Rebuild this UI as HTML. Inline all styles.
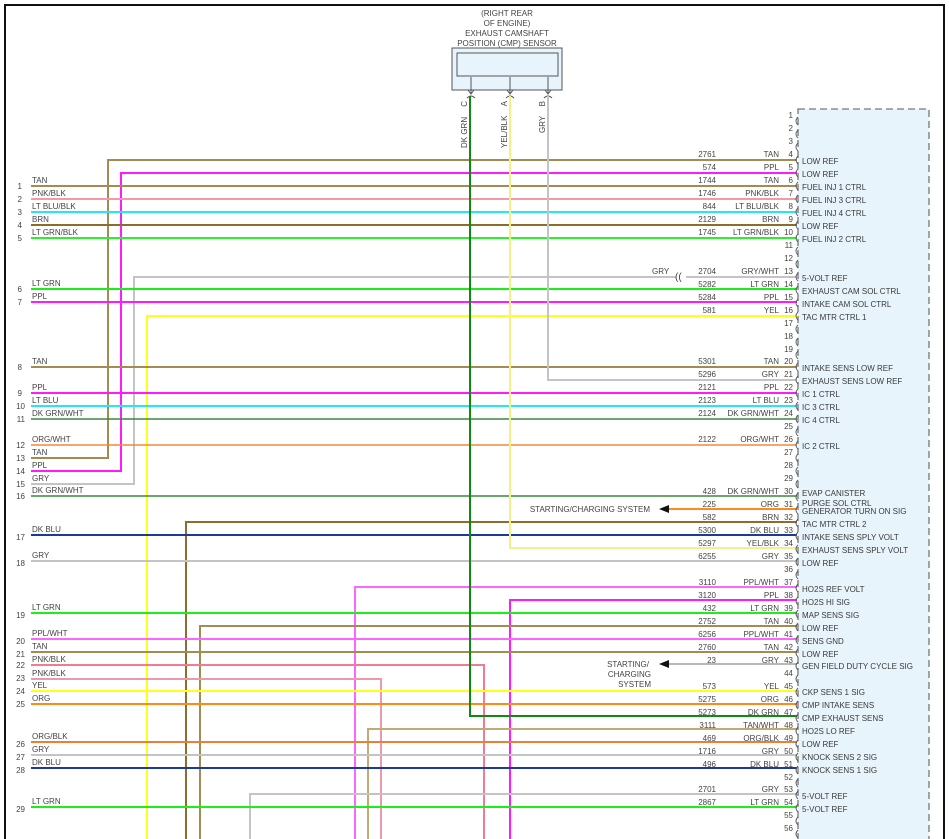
<!DOCTYPE html>
<html><head><meta charset="utf-8"><style>
html,body{margin:0;padding:0;background:#fff;}
svg{display:block;font-family:"Liberation Sans",Arial,sans-serif;}
text{font-size:8px;fill:#444;}
.r{text-anchor:end;}
.m{text-anchor:middle;}
.b{font-size:8px;fill:#3a3a3a;}
</style></head><body>
<svg width="949" height="839" viewBox="0 0 949 839" xmlns="http://www.w3.org/2000/svg">
<rect x="0" y="0" width="949" height="839" fill="#fff"/>
<path d="M5,839 V5 H944 V839" fill="none" stroke="#111" stroke-width="2"/>
<rect x="798" y="109" width="131" height="735" fill="#e8f4fb" stroke="#777" stroke-width="1.3" stroke-dasharray="7,4"/>
<text class="m" x="507" y="16">(RIGHT REAR</text>
<text class="m" x="507" y="26">OF ENGINE)</text>
<text class="m" x="507" y="36">EXHAUST CAMSHAFT</text>
<text class="m" x="507" y="46">POSITION (CMP) SENSOR</text>
<rect x="452" y="48" width="110" height="42" fill="#e8f4fb" stroke="#555" stroke-width="1"/>
<rect x="457" y="53" width="101" height="23" fill="#e8f4fb" stroke="#555" stroke-width="1"/>
<g stroke="#555" fill="none" stroke-width="1">
<path d="M471,77 V93 M468,90 L471,94 L474,90"/>
<path d="M510,77 V93 M507,90 L510,94 L513,90"/>
<path d="M548,77 V93 M545,90 L548,94 L551,90"/>
<path d="M467,98 Q471,94 475,98 M506,98 Q510,94 514,98 M544,98 Q548,94 552,98"/>
</g>
<text transform="translate(467,101) rotate(-90)" class="r">C</text>
<text transform="translate(507,101) rotate(-90)" class="r">A</text>
<text transform="translate(545,101) rotate(-90)" class="r">B</text>
<text transform="translate(467,148) rotate(-90)">DK GRN</text>
<text transform="translate(507,148) rotate(-90)">YEL/BLK</text>
<text transform="translate(545,133) rotate(-90)">GRY</text>

<g fill="none" stroke-width="2">
<path d="M31,458 H108 V160 H797" stroke="#a38b52"/>
<path d="M31,471 H121 V173 H797" stroke="#ff1aff"/>
<path d="M31,186 H797" stroke="#a38b52"/>
<path d="M31,199 H797" stroke="#f29aa8"/>
<path d="M31,212 H797" stroke="#22e8f5"/>
<path d="M31,225 H797" stroke="#8c6d2c"/>
<path d="M31,238 H797" stroke="#2cf02c"/>
<path d="M31,484 H134 V277 H676 M686,277 H797" stroke="#c4c4c4"/>
<path d="M31,289 H797" stroke="#1aef1a"/>
<path d="M31,302 H797" stroke="#ff1aff"/>
<path d="M147,839 V316 H797" stroke="#ffff1a"/>
<path d="M31,367 H797" stroke="#a38b52"/>
<path d="M548,96 V380 H797" stroke="#c4c4c4"/>
<path d="M31,393 H797" stroke="#ff1aff"/>
<path d="M31,406 H797" stroke="#22e8f5"/>
<path d="M31,419 H797" stroke="#3a8a3a" stroke-width="1.5"/>
<path d="M31,445 H797" stroke="#f0883a" stroke-width="1.5"/>
<path d="M31,496 H797" stroke="#3a8a3a" stroke-width="1.5"/>
<path d="M668,509 H797" stroke="#ff8a1a"/>
<path d="M186,839 V522 H797" stroke="#8c6d2c"/>
<path d="M31,535 H797" stroke="#1b3a9c"/>
<path d="M510,96 V548 H797" stroke="#f2f08a"/>
<path d="M31,561 H797" stroke="#c4c4c4"/>
<path d="M355,839 V587 H797" stroke="#ff66ff"/>
<path d="M510,839 V600 H797" stroke="#ff1aff"/>
<path d="M31,613 H797" stroke="#1aef1a"/>
<path d="M200,839 V626 H797" stroke="#a38b52"/>
<path d="M31,639 H797" stroke="#ff66ff"/>
<path d="M31,652 H797" stroke="#a38b52"/>
<path d="M31,665 H484 V839" stroke="#f27a92"/>
<path d="M668,664 H797" stroke="#b8b8b8"/>
<path d="M31,679 H381 V839" stroke="#ea9aaa"/>
<path d="M31,691 H797" stroke="#ffff1a"/>
<path d="M31,704 H797" stroke="#ff8a1a"/>
<path d="M470,96 V716 H797" stroke="#108a10"/>
<path d="M368,839 V729 H797" stroke="#c2aa72"/>
<path d="M31,742 H797" stroke="#e8803a"/>
<path d="M31,755 H797" stroke="#c4c4c4"/>
<path d="M31,768 H797" stroke="#1b3a9c"/>
<path d="M250,839 V794 H797" stroke="#c4c4c4"/>
<path d="M31,807 H797" stroke="#1aef1a"/>
</g>
<text x="652" y="274">GRY</text>
<text x="675" y="280" style="font-size:10px">((</text>
<path d="M659,509 L669,505 L669,513 Z" fill="#111"/>
<path d="M659,664 L669,660 L669,668 Z" fill="#111"/>
<text class="r" x="650" y="512">STARTING/CHARGING SYSTEM</text>
<text class="r" x="649" y="667">STARTING/</text>
<text class="r" x="651" y="677">CHARGING</text>
<text class="r" x="651" y="687">SYSTEM</text>

<g>
<text x="32" y="183">TAN</text><text class="r" x="22" y="189">1</text>
<text x="32" y="196">PNK/BLK</text><text class="r" x="22" y="202">2</text>
<text x="32" y="209">LT BLU/BLK</text><text class="r" x="22" y="215">3</text>
<text x="32" y="222">BRN</text><text class="r" x="22" y="228">4</text>
<text x="32" y="235">LT GRN/BLK</text><text class="r" x="22" y="241">5</text>
<text x="32" y="286">LT GRN</text><text class="r" x="22" y="292">6</text>
<text x="32" y="299">PPL</text><text class="r" x="22" y="305">7</text>
<text x="32" y="364">TAN</text><text class="r" x="22" y="370">8</text>
<text x="32" y="390">PPL</text><text class="r" x="22" y="396">9</text>
<text x="32" y="403">LT BLU</text><text class="r" x="25" y="409">10</text>
<text x="32" y="416">DK GRN/WHT</text><text class="r" x="25" y="422">11</text>
<text x="32" y="442">ORG/WHT</text><text class="r" x="25" y="448">12</text>
<text x="32" y="455">TAN</text><text class="r" x="25" y="461">13</text>
<text x="32" y="468">PPL</text><text class="r" x="25" y="474">14</text>
<text x="32" y="481">GRY</text><text class="r" x="25" y="487">15</text>
<text x="32" y="493">DK GRN/WHT</text><text class="r" x="25" y="499">16</text>
<text x="32" y="532">DK BLU</text><text class="r" x="25" y="540">17</text>
<text x="32" y="558">GRY</text><text class="r" x="25" y="566">18</text>
<text x="32" y="610">LT GRN</text><text class="r" x="25" y="618">19</text>
<text x="32" y="636">PPL/WHT</text><text class="r" x="25" y="644">20</text>
<text x="32" y="649">TAN</text><text class="r" x="25" y="657">21</text>
<text x="32" y="662">PNK/BLK</text><text class="r" x="25" y="668">22</text>
<text x="32" y="676">PNK/BLK</text><text class="r" x="25" y="681">23</text>
<text x="32" y="688">YEL</text><text class="r" x="25" y="694">24</text>
<text x="32" y="701">ORG</text><text class="r" x="25" y="707">25</text>
<text x="32" y="739">ORG/BLK</text><text class="r" x="25" y="747">26</text>
<text x="32" y="752">GRY</text><text class="r" x="25" y="760">27</text>
<text x="32" y="765">DK BLU</text><text class="r" x="25" y="773">28</text>
<text x="32" y="804">LT GRN</text><text class="r" x="25" y="812">29</text>
</g>

<g>
<text class="r" x="716" y="157">2761</text><text class="r" x="779" y="157">TAN</text>
<text class="r" x="716" y="170">574</text><text class="r" x="779" y="170">PPL</text>
<text class="r" x="716" y="183">1744</text><text class="r" x="779" y="183">TAN</text>
<text class="r" x="716" y="196">1746</text><text class="r" x="779" y="196">PNK/BLK</text>
<text class="r" x="716" y="209">844</text><text class="r" x="779" y="209">LT BLU/BLK</text>
<text class="r" x="716" y="222">2129</text><text class="r" x="779" y="222">BRN</text>
<text class="r" x="716" y="235">1745</text><text class="r" x="779" y="235">LT GRN/BLK</text>
<text class="r" x="716" y="274">2704</text><text class="r" x="779" y="274">GRY/WHT</text>
<text class="r" x="716" y="287">5282</text><text class="r" x="779" y="287">LT GRN</text>
<text class="r" x="716" y="300">5284</text><text class="r" x="779" y="300">PPL</text>
<text class="r" x="716" y="313">581</text><text class="r" x="779" y="313">YEL</text>
<text class="r" x="716" y="364">5301</text><text class="r" x="779" y="364">TAN</text>
<text class="r" x="716" y="377">5296</text><text class="r" x="779" y="377">GRY</text>
<text class="r" x="716" y="390">2121</text><text class="r" x="779" y="390">PPL</text>
<text class="r" x="716" y="403">2123</text><text class="r" x="779" y="403">LT BLU</text>
<text class="r" x="716" y="416">2124</text><text class="r" x="779" y="416">DK GRN/WHT</text>
<text class="r" x="716" y="442">2122</text><text class="r" x="779" y="442">ORG/WHT</text>
<text class="r" x="716" y="494">428</text><text class="r" x="779" y="494">DK GRN/WHT</text>
<text class="r" x="716" y="507">225</text><text class="r" x="779" y="507">ORG</text>
<text class="r" x="716" y="520">582</text><text class="r" x="779" y="520">BRN</text>
<text class="r" x="716" y="533">5300</text><text class="r" x="779" y="533">DK BLU</text>
<text class="r" x="716" y="546">5297</text><text class="r" x="779" y="546">YEL/BLK</text>
<text class="r" x="716" y="559">6255</text><text class="r" x="779" y="559">GRY</text>
<text class="r" x="716" y="585">3110</text><text class="r" x="779" y="585">PPL/WHT</text>
<text class="r" x="716" y="598">3120</text><text class="r" x="779" y="598">PPL</text>
<text class="r" x="716" y="611">432</text><text class="r" x="779" y="611">LT GRN</text>
<text class="r" x="716" y="624">2752</text><text class="r" x="779" y="624">TAN</text>
<text class="r" x="716" y="637">6256</text><text class="r" x="779" y="637">PPL/WHT</text>
<text class="r" x="716" y="650">2760</text><text class="r" x="779" y="650">TAN</text>
<text class="r" x="716" y="663">23</text><text class="r" x="779" y="663">GRY</text>
<text class="r" x="716" y="689">573</text><text class="r" x="779" y="689">YEL</text>
<text class="r" x="716" y="702">5275</text><text class="r" x="779" y="702">ORG</text>
<text class="r" x="716" y="715">5273</text><text class="r" x="779" y="715">DK GRN</text>
<text class="r" x="716" y="728">3111</text><text class="r" x="779" y="728">TAN/WHT</text>
<text class="r" x="716" y="741">469</text><text class="r" x="779" y="741">ORG/BLK</text>
<text class="r" x="716" y="754">1716</text><text class="r" x="779" y="754">GRY</text>
<text class="r" x="716" y="767">496</text><text class="r" x="779" y="767">DK BLU</text>
<text class="r" x="716" y="792">2701</text><text class="r" x="779" y="792">GRY</text>
<text class="r" x="716" y="805">2867</text><text class="r" x="779" y="805">LT GRN</text>
</g>
<g>
<text class="r" x="793" y="118">1</text><text class="r" x="793" y="131">2</text><text class="r" x="793" y="144">3</text>
<text class="r" x="793" y="157">4</text><text class="r" x="793" y="170">5</text><text class="r" x="793" y="183">6</text>
<text class="r" x="793" y="196">7</text><text class="r" x="793" y="209">8</text><text class="r" x="793" y="222">9</text>
<text class="r" x="793" y="235">10</text><text class="r" x="793" y="248">11</text><text class="r" x="793" y="261">12</text>
<text class="r" x="793" y="274">13</text><text class="r" x="793" y="287">14</text><text class="r" x="793" y="300">15</text>
<text class="r" x="793" y="313">16</text><text class="r" x="793" y="326">17</text><text class="r" x="793" y="339">18</text>
<text class="r" x="793" y="352">19</text><text class="r" x="793" y="364">20</text><text class="r" x="793" y="377">21</text>
<text class="r" x="793" y="390">22</text><text class="r" x="793" y="403">23</text><text class="r" x="793" y="416">24</text>
<text class="r" x="793" y="429">25</text><text class="r" x="793" y="442">26</text><text class="r" x="793" y="455">27</text>
<text class="r" x="793" y="468">28</text><text class="r" x="793" y="481">29</text><text class="r" x="793" y="494">30</text>
<text class="r" x="793" y="507">31</text><text class="r" x="793" y="520">32</text><text class="r" x="793" y="533">33</text>
<text class="r" x="793" y="546">34</text><text class="r" x="793" y="559">35</text><text class="r" x="793" y="572">36</text>
<text class="r" x="793" y="585">37</text><text class="r" x="793" y="598">38</text><text class="r" x="793" y="611">39</text>
<text class="r" x="793" y="624">40</text><text class="r" x="793" y="637">41</text><text class="r" x="793" y="650">42</text>
<text class="r" x="793" y="663">43</text><text class="r" x="793" y="676">44</text><text class="r" x="793" y="689">45</text>
<text class="r" x="793" y="702">46</text><text class="r" x="793" y="715">47</text><text class="r" x="793" y="728">48</text>
<text class="r" x="793" y="741">49</text><text class="r" x="793" y="754">50</text><text class="r" x="793" y="767">51</text>
<text class="r" x="793" y="780">52</text><text class="r" x="793" y="792">53</text><text class="r" x="793" y="805">54</text>
<text class="r" x="793" y="818">55</text><text class="r" x="793" y="831">56</text>
</g>
<g fill="none" stroke="#555" stroke-width="0.9">
<path d="M798,117 q-4,4 0,8 M798,130 q-4,4 0,8 M798,143 q-4,4 0,8 M798,156 q-4,4 0,8 M798,169 q-4,4 0,8 M798,182 q-4,4 0,8 M798,195 q-4,4 0,8 M798,208 q-4,4 0,8 M798,221 q-4,4 0,8 M798,234 q-4,4 0,8 M798,247 q-4,4 0,8 M798,260 q-4,4 0,8 M798,273 q-4,4 0,8 M798,286 q-4,4 0,8 M798,299 q-4,4 0,8 M798,312 q-4,4 0,8 M798,325 q-4,4 0,8 M798,338 q-4,4 0,8 M798,351 q-4,4 0,8 M798,363 q-4,4 0,8 M798,376 q-4,4 0,8 M798,389 q-4,4 0,8 M798,402 q-4,4 0,8 M798,415 q-4,4 0,8 M798,428 q-4,4 0,8 M798,441 q-4,4 0,8 M798,454 q-4,4 0,8 M798,467 q-4,4 0,8 M798,480 q-4,4 0,8 M798,493 q-4,4 0,8 M798,506 q-4,4 0,8 M798,519 q-4,4 0,8 M798,532 q-4,4 0,8 M798,545 q-4,4 0,8 M798,558 q-4,4 0,8 M798,571 q-4,4 0,8 M798,584 q-4,4 0,8 M798,597 q-4,4 0,8 M798,610 q-4,4 0,8 M798,623 q-4,4 0,8 M798,636 q-4,4 0,8 M798,649 q-4,4 0,8 M798,662 q-4,4 0,8 M798,675 q-4,4 0,8 M798,688 q-4,4 0,8 M798,701 q-4,4 0,8 M798,714 q-4,4 0,8 M798,727 q-4,4 0,8 M798,740 q-4,4 0,8 M798,753 q-4,4 0,8 M798,766 q-4,4 0,8 M798,779 q-4,4 0,8 M798,791 q-4,4 0,8 M798,804 q-4,4 0,8 M798,817 q-4,4 0,8 M798,830 q-4,4 0,8"/>
</g>
<g>
<text class="b" x="802" y="164">LOW REF</text>
<text class="b" x="802" y="177">LOW REF</text>
<text class="b" x="802" y="190">FUEL INJ 1 CTRL</text>
<text class="b" x="802" y="203">FUEL INJ 3 CTRL</text>
<text class="b" x="802" y="216">FUEL INJ 4 CTRL</text>
<text class="b" x="802" y="229">LOW REF</text>
<text class="b" x="802" y="242">FUEL INJ 2 CTRL</text>
<text class="b" x="802" y="281">5-VOLT REF</text>
<text class="b" x="802" y="294">EXHAUST CAM SOL CTRL</text>
<text class="b" x="802" y="307">INTAKE CAM SOL CTRL</text>
<text class="b" x="802" y="320">TAC MTR CTRL 1</text>
<text class="b" x="802" y="371">INTAKE SENS LOW REF</text>
<text class="b" x="802" y="384">EXHAUST SENS LOW REF</text>
<text class="b" x="802" y="397">IC 1 CTRL</text>
<text class="b" x="802" y="410">IC 3 CTRL</text>
<text class="b" x="802" y="423">IC 4 CTRL</text>
<text class="b" x="802" y="449">IC 2 CTRL</text>
<text class="b" x="802" y="496">EVAP CANISTER</text>
<text class="b" x="802" y="506">PURGE SOL CTRL</text>
<text class="b" x="802" y="514">GENERATOR TURN ON SIG</text>
<text class="b" x="802" y="527">TAC MTR CTRL 2</text>
<text class="b" x="802" y="540">INTAKE SENS SPLY VOLT</text>
<text class="b" x="802" y="553">EXHAUST SENS SPLY VOLT</text>
<text class="b" x="802" y="566">LOW REF</text>
<text class="b" x="802" y="592">HO2S REF VOLT</text>
<text class="b" x="802" y="605">HO2S HI SIG</text>
<text class="b" x="802" y="618">MAP SENS SIG</text>
<text class="b" x="802" y="631">LOW REF</text>
<text class="b" x="802" y="644">SENS GND</text>
<text class="b" x="802" y="657">LOW REF</text>
<text class="b" x="802" y="669">GEN FIELD DUTY CYCLE SIG</text>
<text class="b" x="802" y="695">CKP SENS 1 SIG</text>
<text class="b" x="802" y="708">CMP INTAKE SENS</text>
<text class="b" x="802" y="721">CMP EXHAUST SENS</text>
<text class="b" x="802" y="734">HO2S LO REF</text>
<text class="b" x="802" y="747">LOW REF</text>
<text class="b" x="802" y="760">KNOCK SENS 2 SIG</text>
<text class="b" x="802" y="773">KNOCK SENS 1 SIG</text>
<text class="b" x="802" y="799">5-VOLT REF</text>
<text class="b" x="802" y="812">5-VOLT REF</text>
</g>
</svg>
</body></html>
